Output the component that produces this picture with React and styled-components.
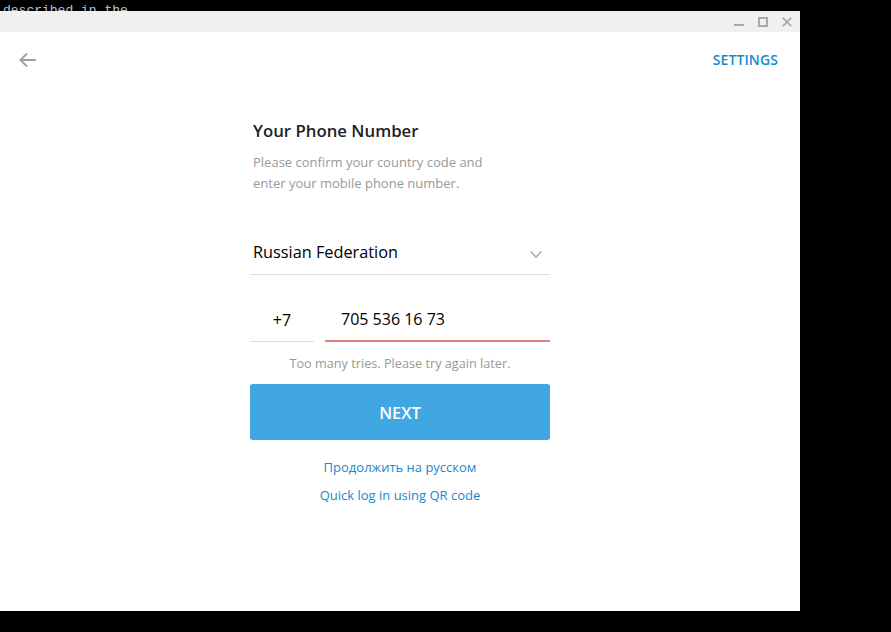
import React from 'react';
import styled, { createGlobalStyle } from 'styled-components';

const GlobalStyle = createGlobalStyle`
  html, body {
    margin: 0;
    padding: 0;
    background: #000;
    font-family: 'Open Sans', sans-serif;
  }
`

function App() {
  return (
    <>
      <GlobalStyle />
      <Page>
        <TermStrip>
          <span>described in the</span>
        </TermStrip>
        <Window>
          <TitleBar>
            <WinButton aria-label="minimize">
              <svg width="10" height="10" viewBox="0 0 10 10">
                <rect x="0" y="7" width="10" height="2" fill="#a9a9a9" />
              </svg>
            </WinButton>
            <WinButton aria-label="maximize">
              <svg width="10" height="10" viewBox="0 0 10 10">
                <rect x="1" y="1" width="8" height="8" fill="none" stroke="#a9a9a9" strokeWidth="2" />
              </svg>
            </WinButton>
            <WinButton aria-label="close">
              <svg width="10" height="10" viewBox="0 0 10 10">
                <path d="M0.8 0.8 L9.2 9.2 M9.2 0.8 L0.8 9.2" stroke="#a9a9a9" strokeWidth="1.7" />
              </svg>
            </WinButton>
          </TitleBar>

          <Header>
            <BackButton aria-label="back">
              <svg width="18" height="18" viewBox="0 0 18 18">
                <path d="M17 9 H2 M8 2.5 L1.5 9 L8 15.5" fill="none" stroke="#a0a0a0" strokeWidth="2" />
              </svg>
            </BackButton>
            <SettingsLink>SETTINGS</SettingsLink>
          </Header>

          <Form>
            <Title>Your Phone Number</Title>
            <Description>
              Please confirm your country code and<br />
              enter your mobile phone number.
            </Description>

            <CountrySelect>
              <span>Russian Federation</span>
              <svg width="14" height="14" viewBox="0 0 14 14">
                <path d="M1.5 4.5 L7 10 L12.5 4.5" fill="none" stroke="#adadad" strokeWidth="1.6" />
              </svg>
            </CountrySelect>

            <PhoneRow>
              <PhoneField width="64px" line="#dcdcdc" center>+7</PhoneField>
              <PhoneField line="#e17e7e" thick>705 536 16 73</PhoneField>
            </PhoneRow>

            <ErrorText>Too many tries. Please try again later.</ErrorText>

            <NextButton>NEXT</NextButton>

            <Links>
              <TextLink>Продолжить на русском</TextLink>
              <TextLink>Quick log in using QR code</TextLink>
            </Links>
          </Form>
        </Window>
      </Page>
    </>
  )
}

const Page = styled.div`
  width: 891px;
  height: 632px;
  background: #000;
  overflow: hidden;
`

const TermStrip = styled.div`
  height: 11px;
  overflow: hidden;
  padding-left: 3px;
  font-family: 'Liberation Mono', monospace;
  font-size: 13px;
  line-height: 15px;
  color: #b8c4cf;
  white-space: pre;

  span {
    display: block;
    margin-top: 3px;
  }
`

const Window = styled.div`
  width: 800px;
  height: 600px;
  background: #fff;
  display: flex;
  flex-direction: column;
`

const TitleBar = styled.div`
  height: 21px;
  background: #f0f0f0;
  display: flex;
  justify-content: flex-end;
  align-items: center;
  padding-right: 8px;
  gap: 14px;
`

const WinButton = styled.div`
  width: 10px;
  height: 10px;
  display: flex;
  svg { display: block; }
`

const Header = styled.div`
  height: 56px;
  display: flex;
  align-items: center;
  justify-content: space-between;
  padding: 0 22px 0 19px;
`

const BackButton = styled.div`
  display: flex;
  margin-top: -1px;
`

const SettingsLink = styled.div`
  font-size: 14px;
  font-weight: 600;
  color: #168acd;
  letter-spacing: 0.1px;
  margin-top: -2px;
`

const Form = styled.div`
  width: 300px;
  margin: 32px 0 0 250px;
  display: flex;
  flex-direction: column;
`

const Title = styled.div`
  padding-left: 3px;
  font-size: 16.8px;
  font-weight: 600;
  line-height: 22px;
  color: #222;
`

const Description = styled.div`
  padding-left: 3px;
  margin-top: 10px;
  font-size: 13px;
  line-height: 21px;
  color: #999;
`

const CountrySelect = styled.div`
  margin-top: 37px;
  height: 41px;
  padding: 0 7px 2px 3px;
  display: flex;
  align-items: center;
  justify-content: space-between;
  border-bottom: 1px solid #e0e0e0;
  font-size: 16.3px;
  color: #000;
  svg { margin-top: 4px; }
`

const PhoneRow = styled.div`
  margin-top: 25px;
  display: flex;
  gap: 11px;
`

const PhoneField = styled.div`
  width: ${p => p.width || 'auto'};
  flex: ${p => (p.width ? 'none' : '1')};
  height: 42px;
  padding-bottom: 2px;
  display: flex;
  align-items: center;
  justify-content: ${p => (p.center ? 'center' : 'flex-start')};
  padding-left: ${p => (p.center ? '0' : '16px')};
  box-sizing: border-box;
  border-bottom: ${p => (p.thick ? '2px' : '1px')} solid ${p => p.line};
  font-size: 16px;
  color: #000;
`

const ErrorText = styled.div`
  margin-top: 11px;
  text-align: center;
  font-size: 12.7px;
  line-height: 20px;
  color: #999;
`

const NextButton = styled.div`
  margin-top: 11px;
  height: 56px;
  border-radius: 3px;
  background: #40a7e3;
  color: #fff;
  display: flex;
  align-items: center;
  justify-content: center;
  font-size: 16.5px;
  font-weight: 600;
`

const Links = styled.div`
  margin-top: 17px;
  display: flex;
  flex-direction: column;
  align-items: center;
  gap: 8px;
`

const TextLink = styled.div`
  font-size: 13px;
  line-height: 20px;
  color: #168acd;
`

export default App
